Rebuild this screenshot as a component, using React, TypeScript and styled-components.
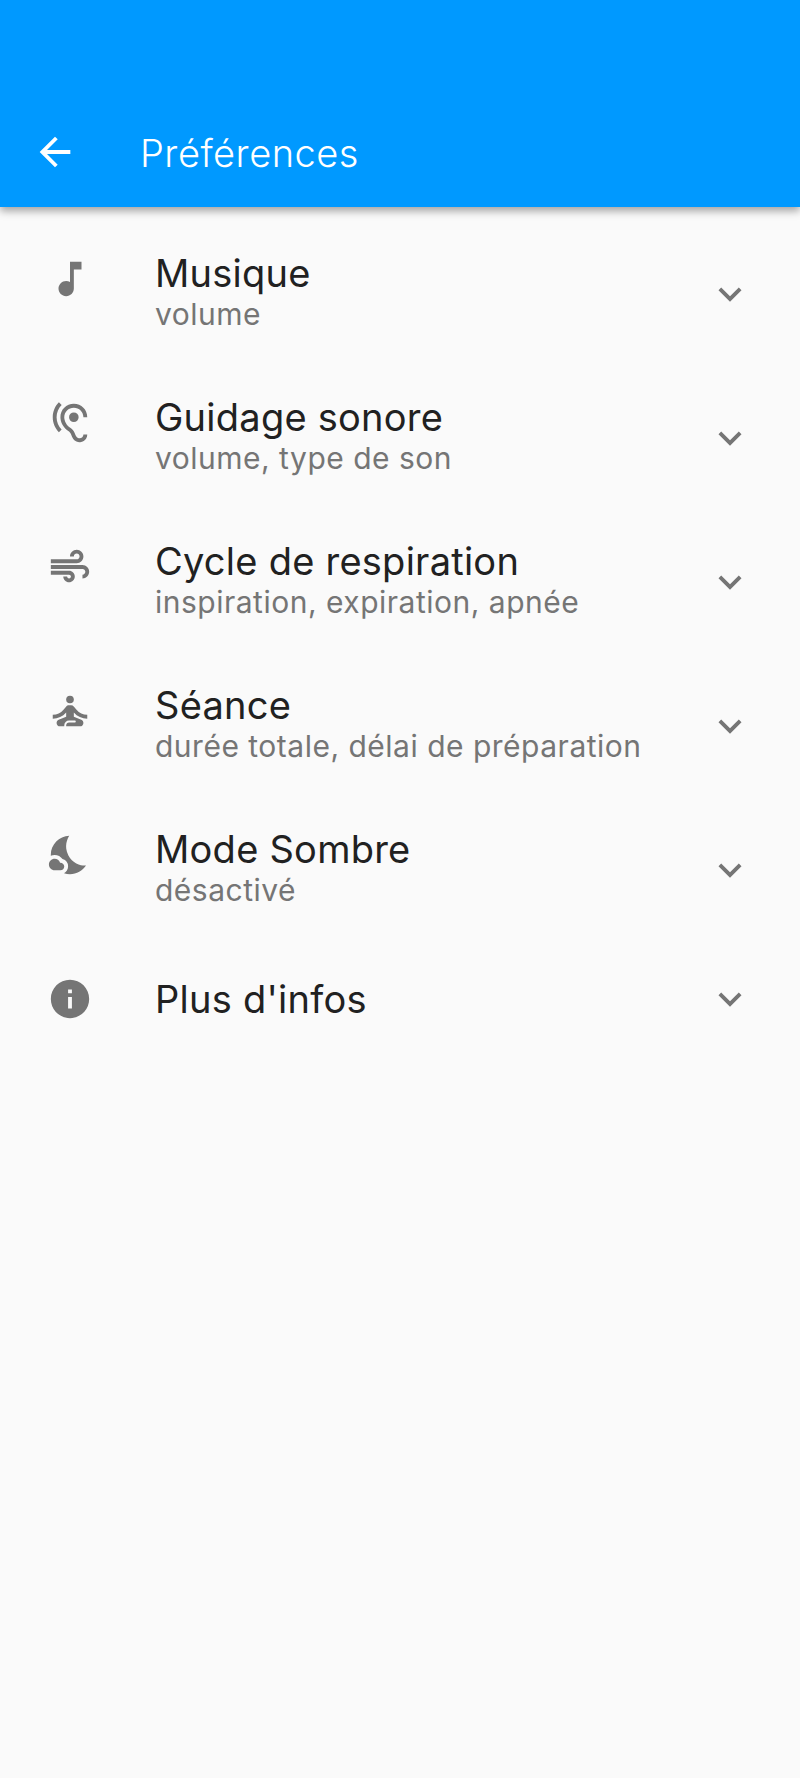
import { FC } from 'react'
import styled, { createGlobalStyle } from 'styled-components'
import { IconType } from 'react-icons'
import {
  MdAir,
  MdArrowBack,
  MdExpandMore,
  MdHearing,
  MdInfo,
  MdMusicNote,
  MdNightsStay,
  MdSelfImprovement,
} from 'react-icons/md'

const GlobalStyle = createGlobalStyle`
  html, body {
    margin: 0;
    background: #fafafa;
  }
  body {
    font-family: "Inter", "Lato", sans-serif;
  }
`

const Page = styled.div`
  width: 800px;
  height: 1778px;
  background: #fafafa;
  overflow: hidden;
`

const Header = styled.header`
  height: 207px;
  box-sizing: border-box;
  padding: 0 0 32px 32px;
  display: flex;
  align-items: flex-end;
  background: #0099ff;
  color: #ffffff;
  box-shadow: 0 4px 8px rgba(0, 0, 0, 0.35);
  position: relative;
`

const BackIcon = styled(MdArrowBack)`
  font-size: 46px;
  flex: none;
`

const HeaderTitle = styled.h1`
  margin: 0 0 -1px 62px;
  font-size: 38px;
  line-height: 46px;
  font-weight: 300;
  letter-spacing: 0.5px;
`

const List = styled.div`
  padding-top: 15px;
  display: flex;
  flex-direction: column;
`

const Row = styled.div<{ $single?: boolean }>`
  height: ${(p) => (p.$single ? 113 : 144)}px;
  box-sizing: border-box;
  padding: 0 47px;
  display: flex;
  align-items: center;
`

const Lead = styled.div<{ $single?: boolean }>`
  width: 108px;
  flex: none;
  color: #757575;
  font-size: 46px;
  line-height: 0;
  margin-top: ${(p) => (p.$single ? 0 : -31)}px;
`

const Texts = styled.div<{ $single?: boolean }>`
  flex: 1;
  min-width: 0;
  padding-bottom: ${(p) => (p.$single ? 0 : 6)}px;
`

const Title = styled.div`
  font-size: 38px;
  line-height: 46px;
  color: #212121;
  letter-spacing: 0.25px;
`

const Subtitle = styled.div`
  font-size: 30px;
  line-height: 36px;
  color: #757575;
  letter-spacing: 0.5px;
`

const Chevron = styled(MdExpandMore)`
  font-size: 46px;
  color: #757575;
  flex: none;
`

type Item = {
  icon: IconType
  title: string
  subtitle?: string
}

const items: Item[] = [
  { icon: MdMusicNote, title: 'Musique', subtitle: 'volume' },
  { icon: MdHearing, title: 'Guidage sonore', subtitle: 'volume, type de son' },
  { icon: MdAir, title: 'Cycle de respiration', subtitle: 'inspiration, expiration, apnée' },
  { icon: MdSelfImprovement, title: 'Séance', subtitle: 'durée totale, délai de préparation' },
  { icon: MdNightsStay, title: 'Mode Sombre', subtitle: 'désactivé' },
  { icon: MdInfo, title: "Plus d'infos" },
]

const App: FC = () => (
  <Page>
    <GlobalStyle />
    <Header>
      <BackIcon />
      <HeaderTitle>Préférences</HeaderTitle>
    </Header>
    <List>
      {items.map((item) => (
        <Row key={item.title} $single={!item.subtitle}>
          <Lead $single={!item.subtitle}>
            <item.icon />
          </Lead>
          <Texts $single={!item.subtitle}>
            <Title>{item.title}</Title>
            {item.subtitle && <Subtitle>{item.subtitle}</Subtitle>}
          </Texts>
          <Chevron />
        </Row>
      ))}
    </List>
  </Page>
)

export default App
